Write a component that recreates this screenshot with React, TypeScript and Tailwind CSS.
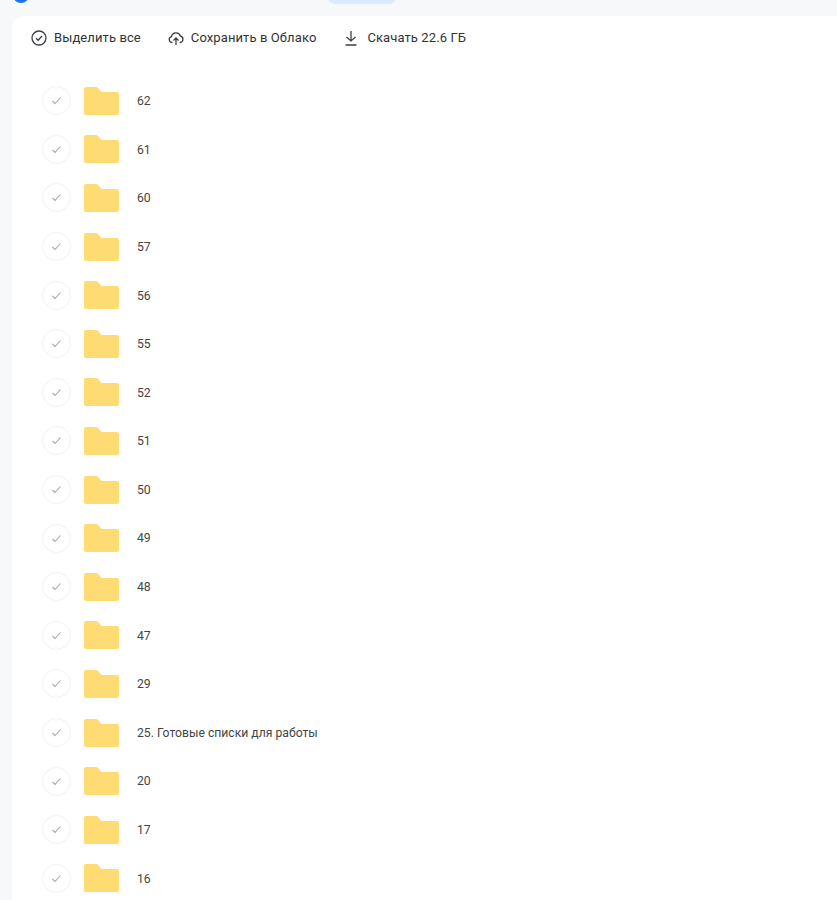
import React from "react";

const folders = ["62", "61", "60", "57", "56", "55", "52", "51", "50", "49", "48", "47", "29", "25. Готовые списки для работы", "20", "17", "16"];

const FolderIcon = () => (
    <svg width="35" height="28" viewBox="0 0 35 28" className="shrink-0">
        <path d="M2 0h10c.8 0 1.500.4 2 1l3.500 4H33c1.100 0 2 .9 2 2v19c0 1.100-.9 2-2 2H2c-1.100 0-2-.9-2-2V2C0 .9.900 0 2 0z" fill="#ffdc73" />
    </svg>
);

const App = () => {
    return (
        <div className="relative h-[900px] w-[837px] overflow-hidden bg-[#f6f8fa] font-['Roboto',sans-serif]">
            <div className="absolute left-[13px] top-[-13px] h-4 w-4 rounded-full bg-[#1a73e8]" />
            <div className="absolute left-[328px] top-[-10px] h-[14px] w-[68px] rounded-full bg-[#dbeafc]" />

            <div className="ml-3 h-[900px] translate-y-4 rounded-tl-xl bg-white">
                <div className="flex h-11 items-center pl-[19px] text-[13px] tracking-[0.1px] text-[#303336]">
                    <button className="flex items-center gap-[7px]">
                        <svg width="16" height="16" viewBox="0 0 16 16" fill="none" stroke="#3c4043" strokeWidth="1.3">
                            <circle cx="8" cy="8" r="7" />
                            <path d="M5 8.2l2.2 2.1L11 6" />
                        </svg>
                        Выделить все
                    </button>
                    <button className="ml-[27px] flex items-center gap-[7px]">
                        <svg width="16" height="16" viewBox="0 0 16 16" fill="none" stroke="#3c4043" strokeWidth="1.3">
                            <path d="M4.500 12.500H4a3 3 0 0 1-.5-5.900A4.600 4.600 0 0 1 12.400 6 3.300 3.300 0 0 1 12 12.500h-.5" />
                            <path d="M8 15V8.500M5.500 10.500L8 8l2.500 2.500" />
                        </svg>
                        Сохранить в Облако
                    </button>
                    <button className="ml-[27px] flex items-center gap-[8px]">
                        <svg width="16" height="16" viewBox="0 0 16 16" fill="none" stroke="#3c4043" strokeWidth="1.3">
                            <path d="M8 1v10M3.500 7L8 11l4.500-4M2.500 15h11" />
                        </svg>
                        Скачать 22.6 ГБ
                    </button>
                </div>

                <div className="pt-[16.5px]">
                    {folders.map((name) => (
                        <div key={name} className="flex h-[48.6px] items-center pl-[30px]">
                            <div className="flex h-[29px] w-[29px] shrink-0 items-center justify-center rounded-full border border-[#f2f2f2]">
                                <svg width="11" height="9" viewBox="0 0 11 9" fill="none" stroke="#a6a6a6" strokeWidth="1.100">
                                    <path d="M1.500 5l2.500 2.500L9.500 1.500" />
                                </svg>
                            </div>
                            <div className="ml-[13px] flex">
                                <FolderIcon />
                            </div>
                            <span className="ml-[18px] pt-px text-[12.2px] text-[#454545]">{name}</span>
                        </div>
                    ))}
                </div>
            </div>
        </div>
    );
};

export default App;
